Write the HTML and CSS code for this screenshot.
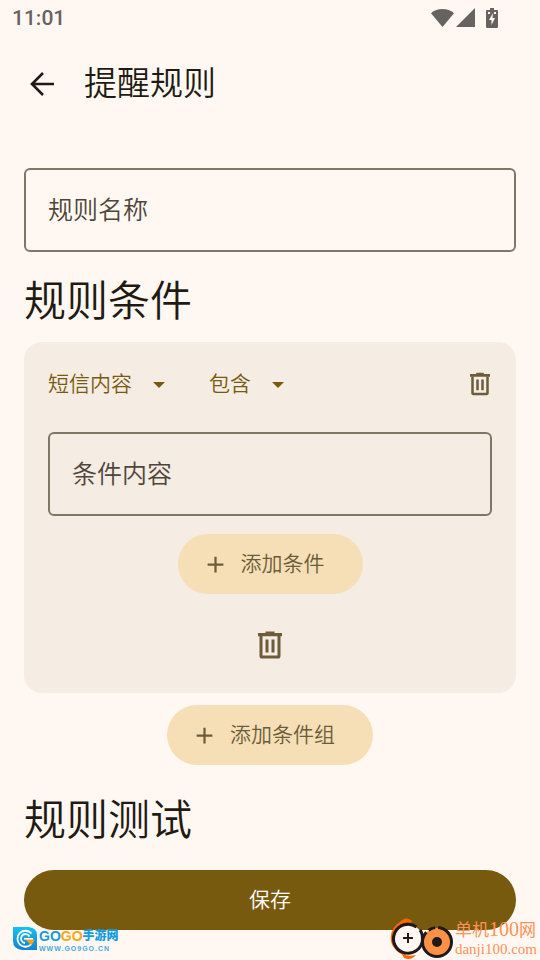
FILE: index.html
```html
<!DOCTYPE html>
<html lang="zh-CN">
<head>
<meta charset="utf-8">
<meta name="viewport" content="width=device-width, initial-scale=1">
<title>提醒规则</title>
<link rel="stylesheet" href="styles.css">
</head>
<body>
<svg class="defs" aria-hidden="true">
  <symbol id="trash" viewBox="0 0 24 24"><path fill="none" stroke="currentColor" stroke-width="2" d="M6 6v13.300q0 .7.7.7h10.600q.7 0 .7-.7V6"/><path fill="currentColor" d="M4 4h5V3h6v1h5v2.200H4zM9 8.300h2v8.700H9zM13 8.300h2v8.700h-2z"/></symbol>
  <symbol id="plus" viewBox="0 0 24 24"><path fill="currentColor" d="M11 5h2v6h6v2h-6v6h-2v-6H5v-2h6z"/></symbol>
  <symbol id="caret" viewBox="0 0 12 6"><path fill="currentColor" d="M0 0h12L6 6z"/></symbol>
</svg>
<div class="status">
  <span>11:01</span>
  <div class="status-icons">
    <svg class="wifi" viewBox="0 0 23 20"><path d="M11.500 19 0 5.200Q5 1 11.500 1T23 5.200z"/></svg>
    <svg class="signal" viewBox="0 0 20 20"><path d="M19 0v19H0z"/></svg>
    <svg class="battery" viewBox="0 0 12 20"><path fill-rule="evenodd" d="M4 0h4v2h3q1 0 1 1v16q0 1-1 1H1q-1 0-1-1V3q0-1 1-1h3zM2 4v2h2V4zM8 4v2h2V4zM7 5l-4 7h2.500v5L9 10H6.500z"/></svg>
  </div>
</div>
<header class="appbar">
  <button class="back" type="button" aria-label="返回"><svg viewBox="0 0 24 24"><path fill="none" stroke="currentColor" stroke-width="2.600" d="M24 12H2M13 1 2 12l11 11"/></svg></button>
  <h1>提醒规则</h1>
</header>
<form class="page">
  <main>
    <input class="field" type="text" aria-label="规则名称" placeholder="规则名称">
    <h2>规则条件</h2>
    <section class="card">
      <div class="row">
        <div class="picker"><select aria-label="匹配对象"><option>短信内容</option></select><svg><use href="#caret"/></svg></div>
        <div class="picker"><select aria-label="匹配方式"><option>包含</option></select><svg><use href="#caret"/></svg></div>
        <button class="icon-button" type="button" aria-label="删除条件"><svg><use href="#trash"/></svg></button>
      </div>
      <input class="field" type="text" aria-label="条件内容" placeholder="条件内容">
      <button class="tonal" type="button"><svg><use href="#plus"/></svg><span>添加条件</span></button>
      <button class="icon-button large" type="button" aria-label="删除条件组"><svg><use href="#trash"/></svg></button>
    </section>
    <button class="tonal" type="button"><svg><use href="#plus"/></svg><span>添加条件组</span></button>
    <h2>规则测试</h2>
  </main>
  <button class="save" type="submit">保存</button>
</form>
<div class="mark mark-left">
  <svg class="gogo-icon" viewBox="0 0 24 24">
    <defs><linearGradient id="blue" x2="0" y2="1"><stop stop-color="#12c4ee"/><stop offset="1" stop-color="#1581d2"/></linearGradient></defs>
    <path fill="url(#blue)" d="M0 0h16q8 1 8 8v15H9Q0 22 0 14z"/>
    <path fill="none" stroke="#fff" stroke-width="1.800" d="M18.500 6.500A8 8 0 1 0 18.500 17"/>
    <path fill="none" stroke="#fff" stroke-width="1.800" d="M16.500 9.500A4.500 4.500 0 1 0 12 16"/>
    <path fill="#f9a11b" d="M12 12h9q0 4-3 6l-3-3z"/><path fill="#fff" d="M11 11h9v1.500h-9z"/>
  </svg>
  <div class="gogo-text">
    <div class="gogo-name"><b>GO</b><b class="orange">GO</b><span>手游网</span></div>
    <div class="gogo-url">WWW.GO9GO.CN</div>
  </div>
</div>
<div class="mark mark-right">
  <svg class="danji-icon" viewBox="0 0 64 42">
    <path fill="none" stroke="#f60" stroke-width="2.500" d="M14 3Q2 9 2 20T16 37"/>
    <path fill="#f60" d="M9 5Q16-3 22 3l-1 2Q14 3 8 8zM12 36q7 3 14 1-5 6-12 3z"/>
    <circle cx="18" cy="21" r="14.500" fill="#fff8f2"/>
    <path fill="none" stroke="#20191a" stroke-width="3" d="M26.500 9A14.500 14.500 0 1 0 32.500 21Q32.500 15 30 12"/>
    <path fill="none" stroke="#20191a" stroke-width="2" d="M18 15v10M13 20h10"/>
    <circle cx="47" cy="24" r="14" fill="#ff9147"/>
    <circle cx="47" cy="24" r="14.500" fill="none" stroke="#20191a" stroke-width="3" stroke-dasharray="56 3 7 3 22.200 0"/>
    <circle cx="47" cy="24" r="5" fill="#20191a"/>
  </svg>
  <div class="danji-text"><div class="danji-name">单机<span>100</span>网</div><div class="danji-url">danji100.com</div></div>
</div>
</body>
</html>
```
FILE: styles.css
```css
* { box-sizing: border-box; }

body {
  margin: 0;
  min-height: 100vh;
  display: flex;
  flex-direction: column;
  position: relative;
  background: #fff8f2;
  color: #1f1b13;
  font-family: Roboto, "Noto Sans CJK SC", sans-serif;
  font-weight: 350;
}

.defs { position: absolute; width: 0; height: 0; }
svg { display: block; flex: none; }
h1, h2 { margin: 0; font-weight: 350; }

button, input, select {
  margin: 0;
  padding: 0;
  border: 0;
  background: none;
  color: inherit;
  font: inherit;
}

.status {
  height: 36px;
  padding: 0 42px 0 12px;
  display: flex;
  align-items: center;
  justify-content: space-between;
  color: #666260;
  font-size: 21px;
  font-weight: 500;
}

.status-icons { display: flex; align-items: center; fill: currentColor; }
.wifi { width: 23px; height: 20px; }
.signal { width: 20px; height: 20px; margin: 0 10px 0 2px; }
.battery { width: 12px; height: 20px; }

.appbar {
  height: 96px;
  padding: 0 24px;
  display: flex;
  align-items: center;
  gap: 24px;
}

.back { width: 36px; height: 36px; padding: 6px; }
.back svg { width: 24px; height: 24px; }
h1 { font-size: 33px; line-height: 48px; }

.page {
  flex: 1;
  display: flex;
  flex-direction: column;
  padding: 36px 24px 30px;
}

main { flex: 1; display: flex; flex-direction: column; align-items: center; }

.field {
  width: 100%;
  height: 84px;
  padding: 0 22px;
  border: 2px solid #807667;
  border-radius: 6px;
  font-size: 25px;
}

.field::placeholder { color: #4e4639; opacity: 1; }

h2 { align-self: stretch; margin: 20px 0 10px; font-size: 42px; line-height: 60px; }
.tonal + h2 { margin: 26px 0 0; }

.card {
  width: 100%;
  margin-bottom: 12px;
  padding: 12px 24px;
  display: flex;
  flex-direction: column;
  align-items: center;
  border-radius: 18px;
  background: #f5ece3;
}

.row {
  width: 100%;
  margin-bottom: 18px;
  display: flex;
  align-items: center;
  color: #785a0f;
  font-size: 21px;
}

.picker { position: relative; margin-right: 44px; }
.picker select { height: 60px; padding-right: 33px; appearance: none; }
.picker svg { position: absolute; right: 0; top: 28px; width: 12px; height: 6px; pointer-events: none; }

.icon-button {
  width: 60px;
  height: 60px;
  display: grid;
  place-items: center;
  color: #6c5c3a;
}

.row .icon-button { margin-left: auto; margin-right: -18px; }
.icon-button svg { width: 30px; height: 30px; }
.icon-button.large { width: 72px; height: 72px; margin-top: 15px; }
.large svg { width: 36px; height: 36px; }

.tonal {
  height: 60px;
  padding: 0 38px 0 24px;
  display: flex;
  align-items: center;
  gap: 12px;
  border-radius: 30px;
  background: #f6dfb6;
  color: #6c5c3a;
  font-size: 21px;
}

.card .tonal { margin-top: 18px; }
.tonal svg { width: 27px; height: 27px; }
.tonal span { padding-bottom: 4px; }

.save {
  height: 60px;
  padding-bottom: 4px;
  border-radius: 30px;
  background: #785a0f;
  color: #fff;
  font-size: 21px;
}

.mark { position: absolute; display: flex; white-space: nowrap; pointer-events: none; }
.mark-left { left: 13px; bottom: 9px; gap: 2px; }
.gogo-icon { width: 24px; height: 24px; }
.gogo-name {
  display: flex;
  align-items: center;
  height: 18px;
  color: #159be0;
  font-family: "Liberation Sans", "Noto Sans CJK SC", sans-serif;
  font-size: 14px;
  line-height: 18px;
}
.gogo-name b { font-weight: 700; }
.gogo-name .orange { color: #fba51a; }
.gogo-name span { font-size: 12px; font-weight: 900; }
.gogo-url { color: #48a9dc; font: 700 7px/7px "Liberation Sans", sans-serif; letter-spacing: 1px; }
.mark-left { bottom: 8px; }

.mark-right { right: 3px; bottom: 0; gap: 1px; color: #ff9257; }
.danji-icon { width: 64px; height: 42px; }
.danji-name { font-size: 17px; font-weight: 400; line-height: 22px; }
.danji-name span { font-family: "Liberation Serif", serif; font-size: 20px; }
.danji-url { font: 15px/16px "Liberation Serif", serif; }
```
